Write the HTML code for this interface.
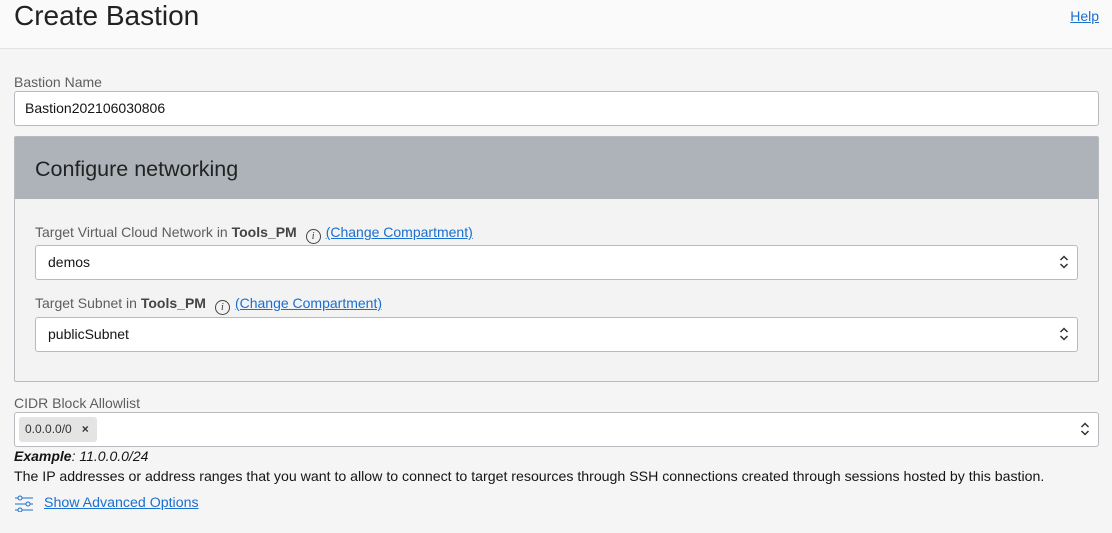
<!DOCTYPE html>
<html><head><style>
*{box-sizing:border-box;margin:0;padding:0}
body{width:1112px;height:533px;overflow:hidden;background:#f5f5f5;font-family:"Liberation Sans",sans-serif;color:#161513;position:relative}
.hdr{position:absolute;left:0;top:0;width:1112px;height:49px;background:#fafafa;border-bottom:1px solid #e2e2e2}
.hdr h1{position:absolute;left:14px;top:0px;font-size:28px;font-weight:normal;color:#222}
.help{position:absolute;right:13px;top:8px;font-size:14px;color:#1a6fcf;text-decoration:underline}
.lbl{position:absolute;font-size:14px;color:#5e5e5e}
.lbl b{color:#444}
.inp{position:absolute;background:#fff;border:1px solid #b7bbbf;border-radius:3px;font-size:14px;color:#161513;padding-left:12px;line-height:32px}
.arr{position:absolute;right:8px;top:8px;width:10px;height:16px}
.panel{position:absolute;left:14px;top:136px;width:1085px;height:246px;background:#f3f3f3;border:1px solid #b7bbbf;border-radius:2px}
.ph{position:absolute;left:0;top:0;width:100%;height:62px;background:#aeb3b9}
.ph span{position:absolute;left:20px;top:20px;font-size:21.5px;color:#222}
.info{display:inline-block;width:15px;height:15px;border:1px solid #444;border-radius:50%;font-size:10px;font-style:italic;text-align:center;line-height:13px;color:#333;vertical-align:-2px;margin:0 5px 0 9px;font-family:"Liberation Serif",serif}
a{color:#1a6fcf;text-decoration:underline}
</style></head><body>
<div class="hdr"><h1>Create Bastion</h1><span class="help">Help</span></div>
<div class="lbl" style="left:14px;top:74px">Bastion Name</div>
<div class="inp" style="left:14px;top:91px;width:1085px;height:35px;padding-left:10px">Bastion202106030806</div>
<div class="panel"><div class="ph"><span>Configure networking</span></div></div>
<div class="lbl" style="left:35px;top:224px">Target Virtual Cloud Network in <b>Tools_PM</b><span class="info">i</span><a>(Change Compartment)</a></div>
<div class="inp" style="left:35px;top:245px;width:1043px;height:35px">demos<svg class="arr" viewBox="0 0 10 16"><path d="M1.5 6 5 2.5 8.5 6M1.5 10 5 13.5 8.5 10" fill="none" stroke="#333" stroke-width="1.5"/></svg></div>
<div class="lbl" style="left:35px;top:295px">Target Subnet in <b>Tools_PM</b><span class="info">i</span><a>(Change Compartment)</a></div>
<div class="inp" style="left:35px;top:317px;width:1043px;height:35px">publicSubnet<svg class="arr" viewBox="0 0 10 16"><path d="M1.5 6 5 2.5 8.5 6M1.5 10 5 13.5 8.5 10" fill="none" stroke="#333" stroke-width="1.5"/></svg></div>
<div class="lbl" style="left:14px;top:395px">CIDR Block Allowlist</div>
<div class="inp" style="left:14px;top:412px;width:1085px;height:35px;padding-left:4px"><span style="display:inline-block;background:#e4e4e4;border-radius:3px;font-size:12px;line-height:25px;height:25px;padding:0 8px 0 6px;vertical-align:1px;color:#333">0.0.0.0/0 &nbsp;&nbsp;<b>×</b></span><svg class="arr" viewBox="0 0 10 16"><path d="M1.5 6 5 2.5 8.5 6M1.5 10 5 13.5 8.5 10" fill="none" stroke="#333" stroke-width="1.5"/></svg></div>
<div style="position:absolute;left:14px;top:448px;font-size:14px;font-style:italic"><b>Example</b>: 11.0.0.0/24</div>
<div style="position:absolute;left:14px;top:468px;font-size:14.15px">The IP addresses or address ranges that you want to allow to connect to target resources through SSH connections created through sessions hosted by this bastion.</div>
<svg style="position:absolute;left:14px;top:495px" width="20" height="17" viewBox="0 0 20 17"><g fill="none" stroke="#1a6fcf" stroke-width="1"><path d="M1 3h3M8 3h11M1 9h11M16 9h3M1 15h3M8 15h11"/><circle cx="6" cy="3" r="2"/><circle cx="14" cy="9" r="2"/><circle cx="6" cy="15" r="2"/></g></svg>
<a style="position:absolute;left:44px;top:495px;font-size:14.2px">Show Advanced Options</a>
</body></html>
